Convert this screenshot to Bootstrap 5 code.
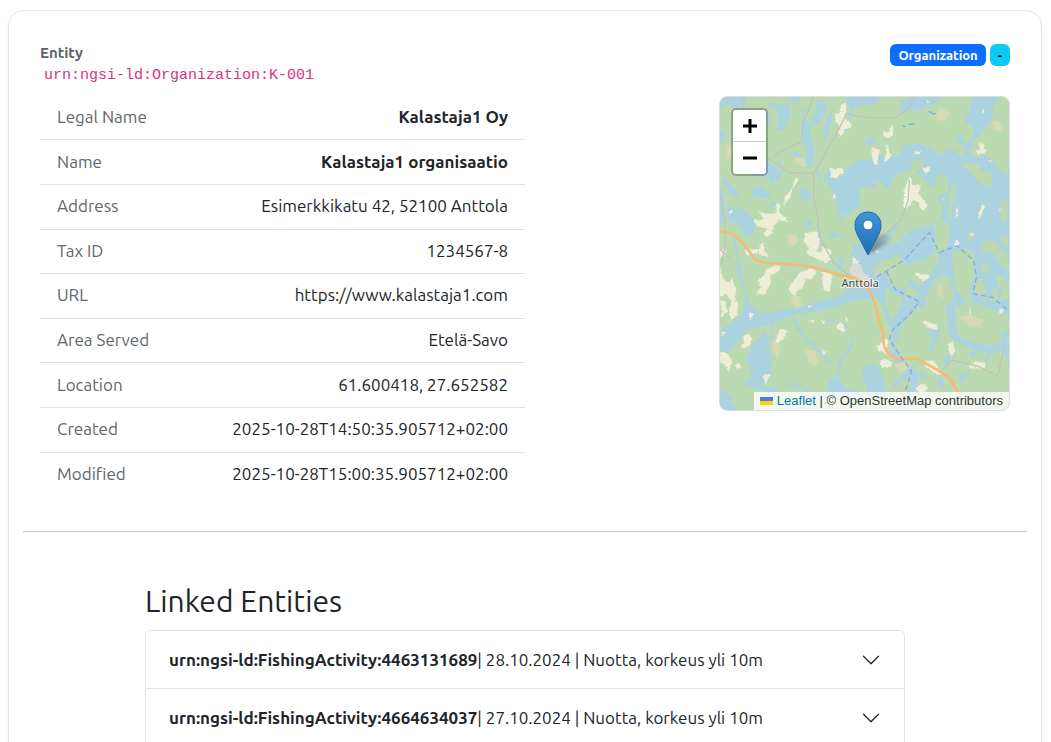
<!DOCTYPE html>
<html lang="en">
<head>
<meta charset="utf-8">
<meta name="viewport" content="width=device-width, initial-scale=1">
<title>Kalastaja1 organisaatio</title>
<link href="https://cdn.jsdelivr.net/npm/bootstrap@5.3.0/dist/css/bootstrap.min.css" rel="stylesheet">
<style>
  body { font-family: Ubuntu, "Noto Sans", sans-serif; font-size: 17px; line-height: 26px; }
  .page { padding: 10px 9px 0 8px; }
  .entity-card { border-color: #e3e5ea; border-radius: 16px; padding: 31px 14px; box-shadow: 0 2px 4px rgba(0,0,0,.07); }
  .entity-head { padding: 0 17px; }
  .entity-label { font-size: 15px; line-height: 22px; font-weight: 600; color: #5c636a; }
  .entity-urn { font: 15px/24px "Liberation Mono", monospace; padding-left: 4px; display: block; }
  .tags { padding-top: 2px; }
  .tag { font-size: 13px; line-height: 14px; font-weight: 600; padding: 4px 8px; border-radius: 6px; }
  .facts { height: 400px; }
  .facts th, .facts td { padding: 0 17px 1px; vertical-align: middle; }
  .facts th { font-weight: 400; color: #61676d; }
  .facts td { text-align: right; }
  .facts tr:last-child > * { border-bottom: 0; }
  .map-box { max-width: 291px; border: 1px solid #d9dde0; border-radius: 8px; }
  .zoom-box { position: absolute; top: 11px; left: 11px; border: 2px solid rgba(0,0,0,.25); border-radius: 5px; background-clip: padding-box; }
  .zoom-box button { width: 33px; height: 32px; padding: 0; border: 0; background: #fff; display: grid; place-items: center; }
  .zoom-box button:first-child { border-bottom: 1px solid #ccc; }
  .credits { position: absolute; right: 0; bottom: 0; font: 13px/18px "Liberation Sans", sans-serif; color: #333; background: rgba(255,255,255,.8); padding: 0 6px; white-space: nowrap; }
  .credits a { color: #0078a8; text-decoration: none; }
  .pin { position: absolute; left: 134px; top: 114px; }
  .divider { border-top: 1px solid #8a8f94; opacity: .5; margin: 35px 0 51px; }
  .linked { max-width: 760px; }
  .linked h2 { font-size: 30px; line-height: 36px; font-weight: 400; margin-bottom: 11px; }
  .accordion { --bs-accordion-btn-icon-width: 20px; --bs-accordion-border-color: #dee2e6; }
  .accordion-button { font-size: 17px; line-height: 25px; padding: 16px 23px; }
  .accordion-button:focus { box-shadow: none; }
  .accordion-button strong { font-weight: 600; }
</style>
</head>
<body>
<main class="page">
  <section class="card entity-card">
    <div class="entity-head">
      <div class="d-flex justify-content-between align-items-start">
        <div>
          <div class="entity-label">Entity</div>
          <code class="entity-urn">urn:ngsi-ld:Organization:K-001</code>
        </div>
        <div class="tags d-flex gap-1 lh-1">
          <span class="badge tag text-bg-primary">Organization</span>
          <span class="badge tag text-bg-info">-</span>
        </div>
      </div>
      <div class="row g-0 pt-2">
        <div class="col-6">
          <table class="table facts mb-0">
            <tbody>
              <tr><th scope="row">Legal Name</th><td class="fw-bold">Kalastaja1 Oy</td></tr>
              <tr><th scope="row">Name</th><td class="fw-bold">Kalastaja1 organisaatio</td></tr>
              <tr><th scope="row">Address</th><td>Esimerkkikatu 42, 52100 Anttola</td></tr>
              <tr><th scope="row">Tax ID</th><td>1234567-8</td></tr>
              <tr><th scope="row">URL</th><td>https://www.kalastaja1.com</td></tr>
              <tr><th scope="row">Area Served</th><td>Etelä-Savo</td></tr>
              <tr><th scope="row">Location</th><td>61.600418, 27.652582</td></tr>
              <tr><th scope="row">Created</th><td>2025-10-28T14:50:35.905712+02:00</td></tr>
              <tr><th scope="row">Modified</th><td>2025-10-28T15:00:35.905712+02:00</td></tr>
            </tbody>
          </table>
        </div>
        <div class="col-6">
          <div class="map-box position-relative overflow-hidden ms-auto">
            <svg class="d-block w-100" viewBox="0 0 870 942" role="img" aria-label="Map of Anttola">
              <defs>
                <filter id="rough" x="0" y="0" width="100%" height="100%"><feTurbulence type="fractalNoise" baseFrequency=".12" numOctaves="2" seed="4"/><feDisplacementMap in="SourceGraphic" scale="10" xChannelSelector="R" yChannelSelector="G"/></filter>
              </defs>
              <rect width="870" height="942" fill="#bcdab1"/>
              <g filter="url(#rough)">
                <rect x="-30" y="-30" width="930" height="1000" fill="#bcdab1"/>
                <g fill="#aad3df" stroke="#aad3df" stroke-linejoin="round" stroke-linecap="round">
                  <!-- north-west lakes -->
                  <g transform="translate(-30 -21)" stroke-width="2">
                    <path d="M25 15H110L104 45 78 56 62 44 44 46 30 60ZM100 55l15 5 4 28 -12-8ZM195 45l24-5 24 8 -4 30 -17 42 -22-4 8-32ZM240 15h30l-2 22-24-4ZM320 30l25 6 4 26-18 32-20 18-8-10 18-34ZM368 62l-4 38-14 52-6-8 5-50ZM282 98l18-8 0 42 15 44-9 58-20-14 8-40-16-26ZM246 185l18 6 24 18-6 10-26-8ZM190 55l-12-6 6-12 14 4ZM130 205l26-4 36 26 24 30-30 28-16-28-50 4 8-22ZM355 240l40 26 28-40 27-14V350l-18 8-17 18-30-6-4-36-30-60-8-12ZM265 302l30-5 12 24-26 15ZM132 290l30 8 20 25-20 3-34-8ZM40 262l30 30 18 28-22-6-26-26ZM50 355l30-3 34 18 22 28-5 36-26 6-22-38-24-6-14-20ZM25 310l12-15 6 60-4 45-14 5ZM355 432l20-5 20 10-22 8ZM292 396l12-4-4 26-10-4ZM326 405l10 50-5 20-8-30ZM30 120l14 12-4 30-10-8ZM412 20h38v25l-24 14-16-20Z"/>
                    <path fill="none" stroke-width="7" d="M205 210l12 34M283 60l-8 60M365 70l-18 60M320 240l12 30M135 300l48 14M384 376l12 16M430 60l-20 60M170 60l10 40M235 300l20-12M180 350l30-14"/>
                  </g>
                  <!-- north-east bay and its arms -->
                  <g transform="translate(420 -21)" stroke-width="2">
                    <path d="M344 15H420L402 52l-4 34-20 28-14 24-24 6-10 46 26 14 48-18 34 34 20 32V500H130l-20-30 32-40 34-14 50-10 14-26-6-42 10-38-44-22-18-26-30-14-30 14-2-14-18 30-12 38-22 46-10-6 16-64-24-10-46 5-15-62 40-4 28-14 36 6 30-6 12-34 48 0 34 14 24 16 46-16 8-34 22-40 14-46ZM0 20h60l-14 20-46 4ZM128 32l42-12 80 4-20 14-52 22-54 10ZM20 148l24-4 4 16-26 2ZM-20 240l60-10 10 60-70 10ZM64 448l40-44 12 4-34 46-54 36-6-4Z"/>
                  </g>
                  <!-- south-west river and lakes -->
                  <g transform="translate(-30 459)" stroke-width="2">
                    <path d="M66-45 80-20 82 60l12 48 24 56 30 28 50-4 62-12 50-14 60-16 60-32h58v32l-66 10-62 22-100 16-50 18-28 14-32 6-40 10-18 26-32 18-27 34V242l58-40 16-40-10-84-10-40ZM134 280l10-12 22-24 8 38 12 62-4 30-8 30-50-14-2-30-14-34ZM25 260l56 10-15 35-41 5ZM30 420l30 24 26 45H25ZM108 392l40 8 10 14 46 4-10 14-60-16-28-6ZM360 400l20-24 18 30 20 16 32 8v20H330l22-30ZM390 22l10 10-4 36-10-10ZM425 10h40v90l-22-24-20-14Z"/>
                    <path fill="none" stroke-width="7" d="M252 205l14 34 32 38 36 36 30 34M182 215l4 50 8 60M432 268l-16 40-22 14-8 60M358 212l22 8 30 10M402 240l10 24M232 405l40 6 26 20"/>
                  </g>
                  <!-- south-east archipelago -->
                  <g transform="translate(420 459)" stroke-width="2">
                    <path d="M-20-20H447V120l-20-16-4 46-16-12-44 4 18 20 66-10v46l-80-30-42-14-26 20-14-10 5 50 5 48 62 24 40 4 44-14 6 16-50 24-60-20-58-24-12-34-6-66-32-44-16 16-34 50-22 26-26 32-14 34 8 38 38 36 16 24-10 38-28 44-14-2 30-56-14-30-22-20-26-36 4-70-14-32-12-48-20-24-46-30ZM234 240l8-6-6 38-20 34-6-4 12-36-20-18ZM14 352l36-6 16 26 14 52-14 26H16l8-34-16-34ZM262 320l12-6-6 36-14-8ZM330 310l20-8 4 12-12 14ZM430 246l16 0v90l-20-40ZM302 378l30-6-12 20-18 6ZM366 14l50-4 20 26-16 30-20-12ZM240 380l14 20-8 20-8-18ZM382 318l8 4-6 20Z"/>
                    <path fill="none" stroke-width="12" d="M180 162l-26 34-44 46M196 380l-50-6-40 36M372 90l18 80M290 130l-20 54 12 56"/>
                  </g>
                </g>
                <g fill="#bcdab1">
                  <g transform="translate(420 -21)">
                    <path d="M310 96l18 4 16 16-6 24-20 22-14-24ZM230 260l18-8 20 16-2 36-22 12-14-20ZM138 284l30-20 30 16 40 30-6 60-22 24-54 18-28-30-14-32ZM40 310l60-26 26 26 10 60-20 34-44 30-20-22-30-10ZM228 400l22-10 22 18-4 50-20 32-22-6ZM270 306l16-30 8 14-10 44-14 30ZM318 218l34 4 20 24 26 6 2 36-36-6-30-30-18-20ZM284 160l18-4 16 24-14 22-20-22ZM376 160l24-20 24 16 23 40v60l-24-14-26-34-24-16ZM168 210l30 0-10 24-22 16-14-20ZM424 340l22-12v70l-20-6ZM374 456l20-6 28 12-20 30-34-6ZM228 350l20-22 4 40-14 26-20 2ZM424 440l22-6v50ZM330 430l12 4-2 18-16 6ZM270 350l8 20-2 24-10-18ZM240 390l14 2v20l-22-4Z"/>
                  </g>
                  <g transform="translate(420 459)">
                    <path d="M36 60l24-24 60-20 22 30 10 50-22 24-26-6-24-48-30 20ZM146 44l40-8 46-30 10 20-26 48-30 34-38-20ZM196 152l30-60 26-20 22 20 12 54-34 34-30 6-14-16ZM278 12l26-10 40 30 4 50-20 34 10 44-18-8-30-32ZM350 90l22 0 10 38-22 14-14-20ZM366 36l20 6 8 34-24-8ZM396 0l26-4 26 26v40l-24-16ZM410 76l26 10 12 20v20l-30-14ZM90 60l14 14 8 30-14 10-16-30ZM144 104l36 26-16 14-30-8ZM78 112l26 20 26 12-6 30-26 36-20-40ZM126 230l50-60 16 8 4 50-24 60-36 30-30-22ZM440 192l10 6v40l-36-8-10-20ZM306 4l28-8 14 30-14 14ZM402 114l20 10-6 18-16-8Z"/>
                  </g>
                </g>
                <g fill="#eeedd7">
                  <g transform="translate(-30 -21)">
                    <path d="M393 44l16-6 2 25-5 23 20 18 3 8-24 6-12 24-8-12 4-22-14-16 4-18 14-8ZM358 234l22 4 20-4 4 16-16 6-6 12-22-8 4-12ZM258 265l8 6-18 28-8 26-18 22 4-26 20-26ZM200 342l12 4-4 22 22 18 6 12-30-6-18 26 0 14-20 12-6-14 12-12-32-8-12-20 16 4 14-8-14-20 36 8 18-6ZM286 430l38-4 6 34-10 34-22-14-16-28ZM340 470l26 14-4 20-30-4ZM150 465l10-6 4 26 16 16-34-4ZM57 365l12-4-2 10-8 4ZM368 316l8-4 4 12-8 5Z"/>
                  </g>
                  <g transform="translate(420 -21)">
                    <path d="M72 122l14 6 10-20 8 8-4 20-14 10-14-8ZM38 174l24 6-6 24-4 24-10-8-6-30ZM78 165l10 2 0 18 8 10-14 22-8-8 8-20ZM188 234l24-4 0 14-12 8ZM168 184l18 2-4 8-16-4ZM150 262l8 6-2 18 30 2-8 22 20 28 6 10-10 18-14-14 0-12-18-10-12 24-22-22 16-10-12-16ZM356 160l22 2-4 16 10 4-12 10-14 2-10-12 14-2ZM290 358l8-4-2 24-6 8ZM370 344l8 6-14 40-8-8ZM332 428l14 4-2 8-10-2ZM290 452l12 4-4 14-14-2ZM248 324l8 2-4 8ZM202 30l8 4-6 12ZM368 60l8-2-4 12ZM386 210l12 2-2 8ZM420 360l5-2-2 14Z"/>
                  </g>
                  <g transform="translate(-30 459)">
                    <path d="M25 0h22l-2 20-16 4ZM105 0h45l-8 10-30 8ZM168 60l32-14 14 10-16 16-18 4 4 26-22 34-20-4 10-18-8-20 18-16ZM240 110l30-40 34-14 18 12-16 20-18 2-10 26-18 10-6 14-16-16ZM338 66l32 6-6 30-4 26-18-6-4-30ZM290 0l40 8 34 20-14 14-26-14-30-12ZM26 42l14 46 20 14 4-16 14 30-2 30 8 22-2 30-18 14-6-26 6-30-16-22-22 10ZM30 150l16 6 6 30-16 16ZM210 240l14 0 8 6-12 24-18 12-6-6ZM100 260l16-6 12 16-8 18-22 10-8-6 12-12ZM30 310l20 0 16 24-10 34-10-18-16-10ZM72 350l14-8 8 10-10 8ZM158 380l22-6-4 12-8 18ZM300 214l14-4-2 12ZM335 210l12 8-10 6ZM380 228l16-10 4 12 10 20-22-6ZM408 200l8 14-8 6ZM118 190l12 2-4 18-8 0ZM290 170l20-2-10 8ZM335 300l14 10-6 10ZM36 246l12 4-14 14Z"/>
                  </g>
                  <g transform="translate(420 459)">
                    <path d="M166 70l12 0 10 8 16-4 6 12-16 10-18-14ZM192 214l18 6 20 6 6 14-14 2-16-8-14-12ZM268 282l14-4 6 30-12 12-10-22ZM52 290l16-4 8-22 10 10-2 44-14-10-14-4ZM62 334l18-4 20 12-8 12-26 0ZM196 334l26 2 10 10 6 16 14 14-16 2-20-14-18-10ZM332 348l14-12 34 6-4 16-44 0ZM172 412l22-8 12 14-10 12-24-2ZM422 178l12 4-6 12-8-2ZM330 174l6 14-4 6ZM-20 20l16 14-4 30-14 4ZM48 0l12 4-6 10Z"/>
                  </g>
                </g>
                <g fill="#d3dab4">
                  <path transform="translate(-30 -21)" d="M45 166h18l4 34-18 12ZM256 202l28 0 6 26-12 4-20-16ZM232 434l26 2 8 18-14 16-16-4Z"/>
                  <path transform="translate(420 -21)" d="M234 56l34 0 0 20-12 18-24-4ZM402 92l18 4 12 22-16 10-14-10Z"/>
                  <path transform="translate(-30 459)" d="M244 142l26-4 4 34-16 6-14-18ZM188 272l22 14 2 24-12 20-14-28ZM284 304l30 0 14 30-4 16-26-8Z"/>
                  <path transform="translate(420 459)" d="M234 104l16 2 2 40-18-8ZM302 206l30-14 20 14 22 4-8 24-34-4ZM100 346l46-10 6 20-26 14Z"/>
                </g>
                <path fill="#dcdcd6" d="M400 500l24 4 8 24 36 30-20 10-26-16-24-12-10-20Z"/>
                <path fill="#f6f5e8" d="M560 270l8 20-6 50-10-8ZM478 745l24-18-2 30Z"/>
              </g>
              <g fill="none" stroke-linecap="round" stroke-linejoin="round">
                <path stroke="#c0c3ba" stroke-width="4" d="M64 0l6 30M282 0l-32 80-6 56-68 30-12 14M146 186l64 42 72 2 24-40 54-98 22-45 22 10 54 6 70 0 34-24 28-40M282 230l0 70 12 64 4 46 10 30 36 60 46 40M570 250l-4 60-20 60-58 50M0 300l14 60 2 80-10 60M670 822l30-30 80 20 56 28 20-90M0 458l30 30"/>
                <path stroke="#f4ba78" stroke-width="8" d="M-5 405c42-2 54 14 78 40 24 28 28 50 58 54 52 2 98 4 150 14 50 12 60 24 120 30 40 12 60 48 76 120 10 42 14 42 16 70 -4 30 24 50 42 56 24 4 34-8 60 0 38 20 64 34 90 52 18 24 28 40 38 62"/>
                <path stroke="#8fa6e4" stroke-width="4" stroke-dasharray="13 12" d="M474 540l82-50 74-82 30 60 54-20 50 44 8 50-10 50 60 12 40 34M502 526l26 54 72 36-30 40-50 44-10 30 36 54 30 40-20 70-40 50"/>
              </g>
              <g fill="none" stroke="#72b4dc" stroke-width="4"><path d="M550 86l8 4M567 82h18M628 44l10 3M636 50h14"/></g>
              <text x="366" y="571" font-family="Noto Sans, sans-serif" font-size="33" fill="#4b4b4b" stroke="#fff" stroke-opacity=".65" stroke-width="6" paint-order="stroke">Anttola</text>
            </svg>
            <svg class="pin" width="44" height="46" viewBox="0 0 44 46" aria-hidden="true">
              <defs>
                <linearGradient id="pinFill" x2="0" y2="1"><stop stop-color="#4097d6"/><stop offset="1" stop-color="#1f6db6"/></linearGradient>
                <linearGradient id="shade"><stop stop-color="#333" stop-opacity=".6"/><stop offset="1" stop-color="#333" stop-opacity="0"/></linearGradient>
                <filter id="soft"><feGaussianBlur stdDeviation="1.5"/></filter>
              </defs>
              <path d="M14 43 23 26q8-5 15-1 2 5-10 11Z" fill="url(#shade)" filter="url(#soft)"/>
              <path d="M14 1C6 1 1 7 1 14c0 4 1 7 3 11L14 44 24 25c2-4 3-7 3-11C27 7 22 1 14 1Z" fill="url(#pinFill)" stroke="#28699f"/>
              <circle cx="14" cy="14" r="5" fill="#fff" stroke="#2e6c9e"/>
            </svg>
            <div class="zoom-box overflow-hidden">
              <button type="button" aria-label="Zoom in"><svg width="14" height="14"><path d="M0 7H14M7 0V14" stroke="#000" stroke-width="3"/></svg></button>
              <button type="button" aria-label="Zoom out"><svg width="14" height="14"><path d="M0 7H14" stroke="#000" stroke-width="3"/></svg></button>
            </div>
            <div class="credits"><a href="#"><svg width="13" height="8" viewBox="0 0 13 8" aria-hidden="true"><path fill="#4c7be1" d="M0 0h13v4H0z"/><path fill="#ffd500" d="M0 4h13v4H0z"/></svg> Leaflet</a> | © OpenStreetMap contributors</div>
          </div>
        </div>
      </div>
    </div>
    <hr class="divider">
    <div class="linked w-100 mx-auto">
      <h2>Linked Entities</h2>
      <div class="accordion" id="linkedList">
        <div class="accordion-item">
          <h3 class="accordion-header"><button class="accordion-button collapsed" type="button" data-bs-toggle="collapse" data-bs-target="#catchA" aria-expanded="false" aria-controls="catchA"><span><strong>urn:ngsi-ld:FishingActivity:4463131689</strong>| 28.10.2024 | Nuotta, korkeus yli 10m</span></button></h3>
          <div id="catchA" class="accordion-collapse collapse"></div>
        </div>
        <div class="accordion-item">
          <h3 class="accordion-header"><button class="accordion-button collapsed" type="button" data-bs-toggle="collapse" data-bs-target="#catchB" aria-expanded="false" aria-controls="catchB"><span><strong>urn:ngsi-ld:FishingActivity:4664634037</strong>| 27.10.2024 | Nuotta, korkeus yli 10m</span></button></h3>
          <div id="catchB" class="accordion-collapse collapse"></div>
        </div>
      </div>
    </div>
  </section>
</main>
<script src="https://cdn.jsdelivr.net/npm/bootstrap@5.3.0/dist/js/bootstrap.bundle.min.js"></script>
</body>
</html>
